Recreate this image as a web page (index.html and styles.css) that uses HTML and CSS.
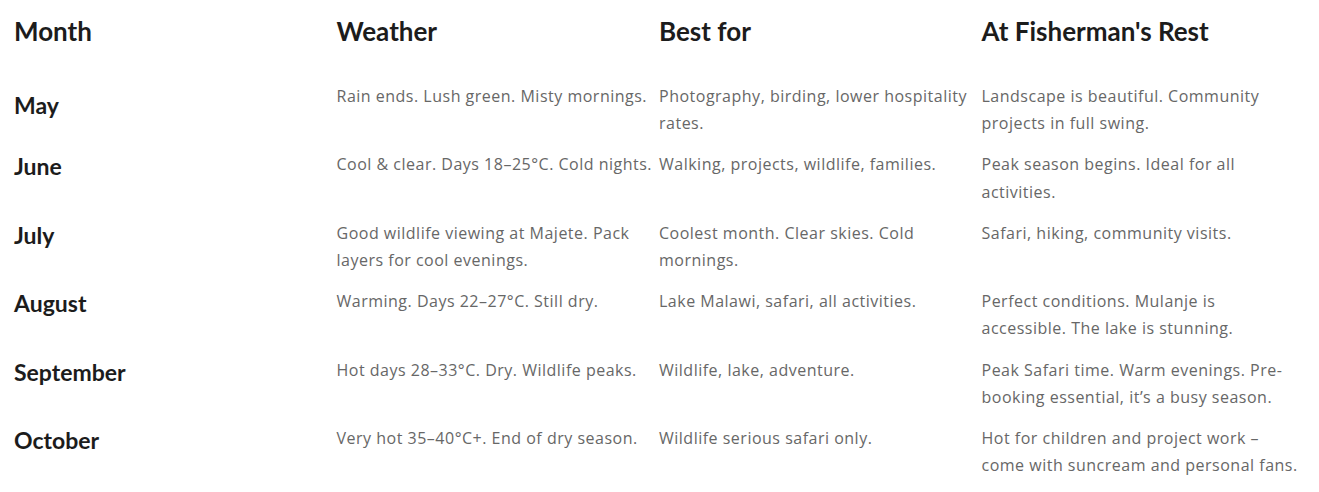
FILE: index.html
```html
<!DOCTYPE html>
<html lang="en">
<head>
<meta charset="utf-8">
<title>When to visit</title>
<link rel="stylesheet" href="styles.css">
</head>
<body>
<div class="schedule">
  <div class="row head">
    <div class="cell">Month</div>
    <div class="cell">Weather</div>
    <div class="cell">Best for</div>
    <div class="cell">At Fisherman's Rest</div>
  </div>
  <div class="row first">
    <div class="cell month">May</div>
    <div class="cell">Rain ends. Lush green. Misty mornings.</div>
    <div class="cell">Photography, birding, lower hospitality rates.</div>
    <div class="cell">Landscape is beautiful. Community projects in full swing.</div>
  </div>
  <div class="row">
    <div class="cell month">June</div>
    <div class="cell">Cool &amp; clear. Days 18–25°C. Cold nights.</div>
    <div class="cell">Walking, projects, wildlife, families.</div>
    <div class="cell">Peak season begins. Ideal for all activities.</div>
  </div>
  <div class="row">
    <div class="cell month">July</div>
    <div class="cell">Good wildlife viewing at Majete. Pack layers for cool evenings.</div>
    <div class="cell">Coolest month. Clear skies. Cold mornings.</div>
    <div class="cell">Safari, hiking, community visits.</div>
  </div>
  <div class="row">
    <div class="cell month">August</div>
    <div class="cell">Warming. Days 22–27°C. Still dry.</div>
    <div class="cell">Lake Malawi, safari, all activities.</div>
    <div class="cell">Perfect conditions. Mulanje is accessible. The lake is stunning.</div>
  </div>
  <div class="row">
    <div class="cell month">September</div>
    <div class="cell">Hot days 28–33°C. Dry. Wildlife peaks.</div>
    <div class="cell">Wildlife, lake, adventure.</div>
    <div class="cell">Peak Safari time. Warm evenings. Pre-booking essential, it’s a busy season.</div>
  </div>
  <div class="row">
    <div class="cell month">October</div>
    <div class="cell">Very hot 35–40°C+. End of dry season.</div>
    <div class="cell">Wildlife serious safari only.</div>
    <div class="cell">Hot for children and project work – come with suncream and personal fans.</div>
  </div>
</div>
</body>
</html>
```

FILE: styles.css
```css
html, body {
  margin: 0;
  padding: 0;
  background: #ffffff;
}

.schedule {
  padding: 0 14px;
  display: flex;
  flex-direction: column;
}

.row {
  display: grid;
  grid-template-columns: repeat(4, 322.5px);
}

.cell {
  font-family: "Open Sans", "Liberation Sans", sans-serif;
  font-size: 16px;
  letter-spacing: 0.5px;
  line-height: 27.2px;
  color: #676767;
  padding: 7px 4px 7px 0;
}

.head .cell {
  font-family: "Lato", "Noto Sans", sans-serif;
  font-weight: 700;
  font-size: 26px;
  letter-spacing: 0;
  line-height: 34px;
  color: #1c1c1c;
  padding: 14px 0 28px;
}

.cell.month {
  font-family: "Lato", "Noto Sans", sans-serif;
  font-weight: 700;
  font-size: 23px;
  letter-spacing: 0;
  color: #1c1c1c;
  padding-top: 9px;
}

.first .cell.month {
  padding-top: 16px;
}
```
